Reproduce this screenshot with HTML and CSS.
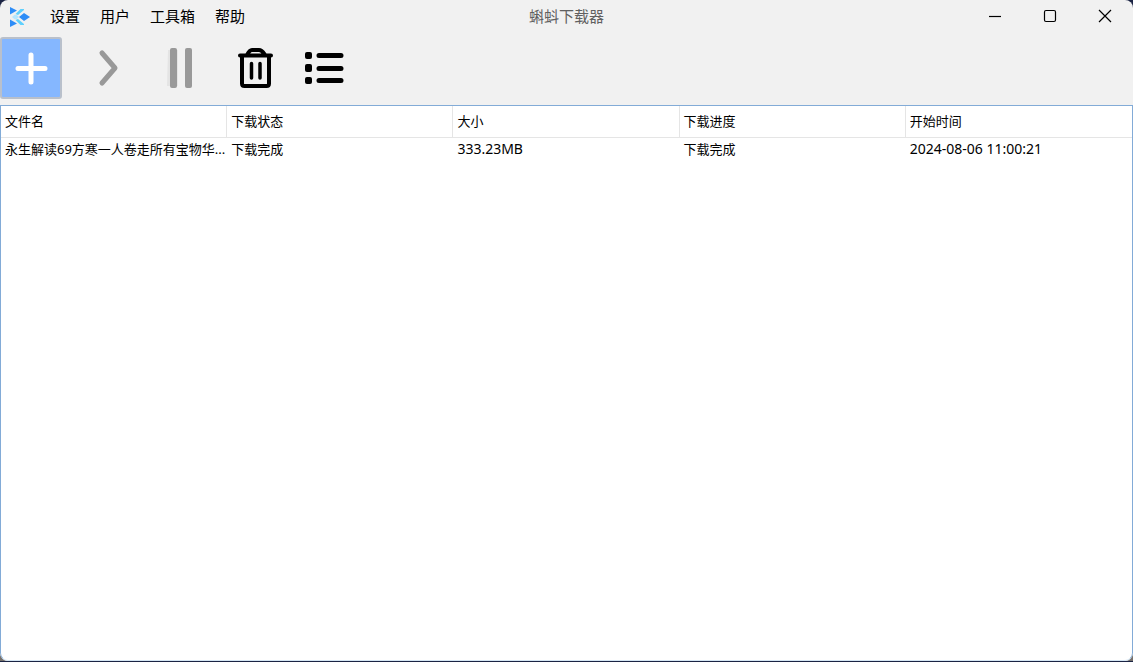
FILE: index.html
```html
<!DOCTYPE html>
<html lang="zh-CN">
<head>
<meta charset="utf-8">
<meta name="viewport" content="width=device-width, initial-scale=1">
<title>蝌蚪下载器</title>
<link rel="stylesheet" href="styles.css">
</head>
<body>
<div class="window">
  <header class="titlebar">
    <div class="titlebar-start">
      <svg class="logo" viewBox="0 0 20 20" aria-hidden="true">
        <path fill="#5fd0fd" d="M5.500 7l5-5h3.500v1L8 8zM5.500 13l5 5h3.500v-1L8 12z"/>
        <path fill="#b5e6ff" d="M2 10l2.500-2.300h2L9 10l-2.500 2.300h-2z"/>
        <path fill="#2e8df7" d="M0 0l7 3.500L0 7.500zM0 20l7-3.500L0 12.500zM9 10l5-4 6 4-6 4z"/>
      </svg>
      <nav class="menu">
        <button type="button">设置</button>
        <button type="button">用户</button>
        <button type="button">工具箱</button>
        <button type="button">帮助</button>
      </nav>
    </div>
    <h1 class="title">蝌蚪下载器</h1>
    <div class="controls">
      <button type="button" aria-label="最小化"><svg viewBox="0 0 14 14"><path d="M1 7.500h12"/></svg></button>
      <button type="button" aria-label="最大化"><svg viewBox="0 0 14 14"><rect x="1.500" y="1.500" width="11" height="11" rx="1.500"/></svg></button>
      <button type="button" aria-label="关闭"><svg viewBox="0 0 14 14"><path d="M1 1l12 12M13 1L1 13"/></svg></button>
    </div>
  </header>
  <div class="toolbar">
    <button type="button" class="tool tool-add" aria-label="新建"><svg viewBox="0 0 40 40"><path d="M20 7v27M7 20.500h27" stroke="#fff" stroke-width="5"/></svg></button>
    <button type="button" class="tool" aria-label="开始"><svg viewBox="0 0 40 40"><path d="M17 5l13 15-13 15" stroke="#999" stroke-width="5"/></svg></button>
    <button type="button" class="tool" aria-label="暂停"><svg viewBox="0 0 40 40"><path fill="#e4e4e4" d="M9 2h10v36H8z"/><rect x="11" y="0" width="7" height="40" rx="2" fill="#999"/><rect x="26" y="0" width="7" height="40" rx="2" fill="#999"/></svg></button>
    <button type="button" class="tool" aria-label="删除"><svg viewBox="-3 0 40 40"><path d="M6 8v27.500Q6 38 8.500 38h22q2.500 0 2.500-2.500V8M4 7.500h31M11 7c2-4 3-5 5-5h7c3 0 4 2 6 5" stroke="#000" stroke-width="4"/><path d="M15.500 15.500v14.500M24 15.500v14.500" stroke="#000" stroke-width="3.500"/></svg></button>
    <button type="button" class="tool" aria-label="列表"><svg viewBox="4 0 40 40"><path d="M16 7.500h22M16 20.500h22M16 32.500h22" stroke="#000" stroke-width="5"/><rect x="2" y="4" width="7" height="7" rx="2"/><rect x="2" y="16" width="7" height="8" rx="2"/><rect x="2" y="29" width="7" height="7" rx="2"/></svg></button>
  </div>
  <main class="list">
    <table>
      <thead>
        <tr><th scope="col">文件名</th><th scope="col">下载状态</th><th scope="col">大小</th><th scope="col">下载进度</th><th scope="col">开始时间</th></tr>
      </thead>
      <tbody>
        <tr><td>永生解读69方寒一人卷走所有宝物华...</td><td>下载完成</td><td class="num">333.23MB</td><td>下载完成</td><td class="num">2024-08-06 11:00:21</td></tr>
      </tbody>
    </table>
  </main>
</div>
</body>
</html>
```
FILE: styles.css
```css
* {
  box-sizing: border-box;
}

body {
  margin: 0;
  background: linear-gradient(#1b2444 50%, #75706c 50%);
  color: #000;
  font-family: "Noto Sans", "Noto Sans CJK SC", sans-serif;
  font-size: 13px;
}

button {
  margin: 0;
  padding: 0;
  border: 0;
  background: none;
  color: inherit;
  font: inherit;
}

.window {
  display: flex;
  flex-direction: column;
  height: calc(100vh - 1px);
  border-radius: 8px;
  background: #f1f1f1;
  overflow: hidden;
}

.titlebar {
  display: grid;
  grid-template-columns: 1fr auto 1fr;
  align-items: center;
  height: 32px;
  font-size: 15px;
  line-height: 30px;
}

.titlebar-start {
  display: flex;
  align-items: center;
  gap: 20px;
  padding-left: 10px;
}

.logo {
  width: 20px;
  height: 20px;
  margin-top: 2px;
}

.menu {
  display: flex;
  gap: 20px;
}

.title {
  margin: 0;
  color: #606060;
  font-size: 15px;
  font-weight: 400;
}

.controls {
  display: flex;
  justify-content: flex-end;
  padding-right: 1px;
}

.controls button {
  display: grid;
  place-items: center;
  width: 55px;
  height: 32px;
}

.controls svg {
  width: 14px;
  height: 14px;
  fill: none;
  stroke: #000;
  stroke-width: 1.2;
}

.toolbar {
  display: flex;
  gap: 12px;
  padding: 5px 0 6px;
}

.tool {
  display: grid;
  place-items: center;
  width: 62px;
  height: 62px;
  border: 2px solid transparent;
  border-radius: 3px;
}

.tool-add {
  border-color: #b9c0cb;
  background: #85b7ff;
}

.tool svg {
  width: 40px;
  height: 40px;
  overflow: visible;
  stroke-linecap: round;
  stroke-linejoin: round;
}

.tool path:not([fill]) {
  fill: none;
}

.list {
  flex: 1;
  border: 1px solid #82abd7;
  border-bottom-color: #d5e6f4;
  border-radius: 0 0 8px 8px;
  background: #fff;
}

table {
  width: 100%;
  border-collapse: separate;
  border-spacing: 0;
  table-layout: fixed;
}

th,
td {
  padding: 0 0 0 4px;
  overflow: hidden;
  font-weight: 400;
  line-height: 22px;
  text-align: left;
  white-space: nowrap;
}

th {
  height: 32px;
  padding-bottom: 2px;
  border-right: 1px solid #e5e5e5;
  border-bottom: 1px solid #e5e5e5;
}

th:last-child {
  border-right: 0;
}

.num {
  font-size: 14px;
}
```
